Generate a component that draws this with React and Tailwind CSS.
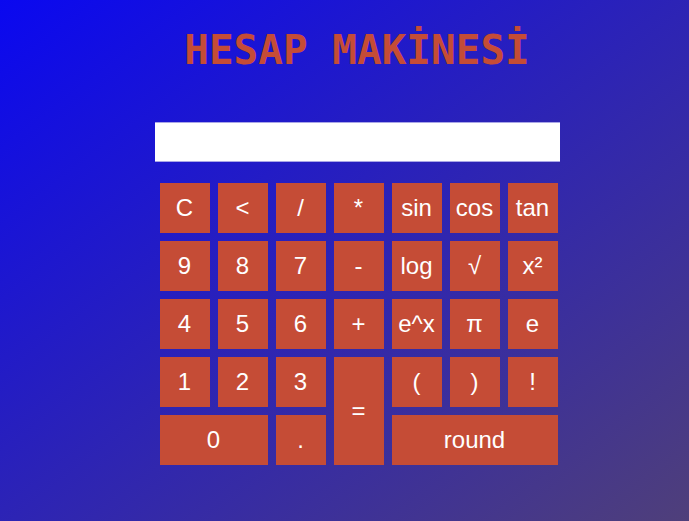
import React, { useState } from "react";

const keys = [
  { label: "C" }, { label: "<" }, { label: "/" }, { label: "*" }, { label: "sin" }, { label: "cos" }, { label: "tan" },
  { label: "9" }, { label: "8" }, { label: "7" }, { label: "-" }, { label: "log" }, { label: "√" }, { label: "x²" },
  { label: "4" }, { label: "5" }, { label: "6" }, { label: "+" }, { label: "e^x" }, { label: "π" }, { label: "e" },
  { label: "1" }, { label: "2" }, { label: "3" }, { label: "=", cls: "row-span-2" }, { label: "(" }, { label: ")" }, { label: "!" },
  { label: "0", cls: "col-span-2" }, { label: "." }, { label: "round", cls: "col-span-3" },
];

const App = () => {
  const [value, setValue] = useState("");

  return (
    <div className="min-h-[521px] w-full bg-[linear-gradient(to_bottom_right,#0a08f0,#4f3f7a)] flex justify-center pl-[25px]">
      <div className="flex flex-col items-center w-[405px]">
        <h1 className="mt-[24px] text-[41px] leading-[52px] font-bold text-[#c54c36] font-['DejaVu_Sans_Mono',monospace]">
          HESAP MAKİNESİ
        </h1>
        <input
          type="text"
          value={value}
          onChange={(e) => setValue(e.target.value)}
          className="mt-[46px] w-[405px] h-[40px] bg-white border-y border-[#a9a6e6] outline-none px-2"
        />
        <div className="mt-[21px] ml-[3px] grid grid-cols-[repeat(7,50px)] auto-rows-[50px] gap-[8px]">
          {keys.map((k) => (
            <button
              key={k.label}
              className={`${k.cls || ""} bg-[#c54c36] text-white text-[24px] font-['Liberation_Sans',Arial,sans-serif] flex items-center justify-center`}
            >
              {k.label}
            </button>
          ))}
        </div>
      </div>
    </div>
  );
};

export default App;
